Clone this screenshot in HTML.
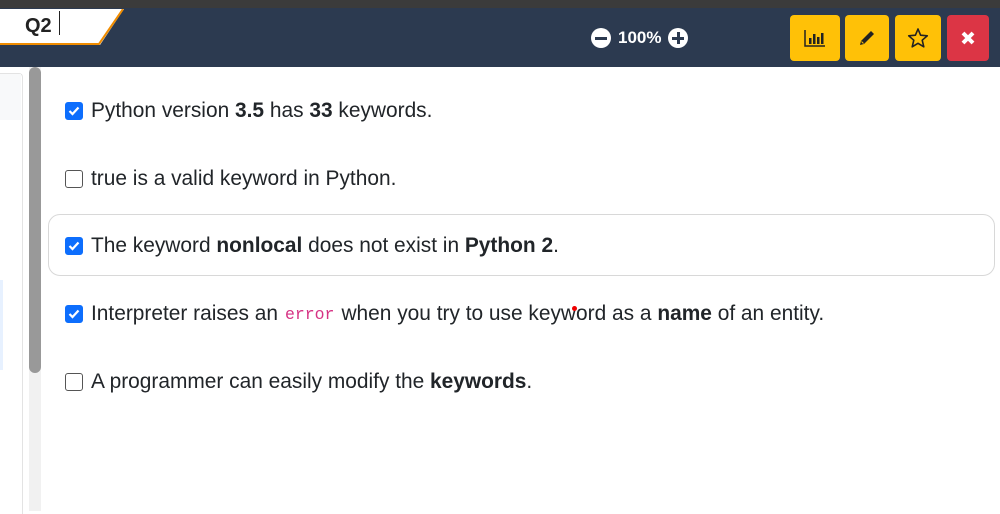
<!DOCTYPE html>
<html><head><style>
body{margin:0;width:1000px;height:511px;overflow:hidden;background:#fff;font-family:"Liberation Sans",sans-serif;position:relative;color:#212529}
.top{position:absolute;left:0;top:0;width:1000px;height:8px;background:#3b3b3b}
.nav{position:absolute;left:0;top:8px;width:1000px;height:59px;background:#2c3a50}
.tab{position:absolute;left:0;top:9px;width:124px;height:36px}
.q{position:absolute;left:25px;top:15px;font-weight:bold;font-size:20px;color:#222}
.cur{position:absolute;left:59px;top:11px;width:1px;height:24px;background:#222}
.zoom{position:absolute;left:591px;top:28px;color:#fff;font-weight:bold;font-size:17px;display:flex;align-items:center;gap:7px}
.circ{width:20px;height:20px;border-radius:50%;background:#fff;position:relative}
.circ:before{content:"";position:absolute;left:4px;top:8.5px;width:12px;height:3px;background:#2c3a50}
.circ.p:after{content:"";position:absolute;left:8.5px;top:4px;width:3px;height:12px;background:#2c3a50}
.btn{position:absolute;top:15px;height:46px;border-radius:4px;background:#ffc107;display:flex;align-items:center;justify-content:center}
.left{position:absolute;left:0;top:73px;width:22px;height:440px;border-right:1px solid #e3e3e3;border-top:1px solid #e3e3e3;border-top-right-radius:4px}
.lg{position:absolute;left:0;top:74px;width:21px;height:46px;background:#f8f9fa}
.lb{position:absolute;left:0;top:280px;width:3px;height:90px;background:#e7f1ff}
.track{position:absolute;left:29px;top:67px;width:12px;height:444px;background:#f1f1f1}
.thumb{position:absolute;left:29px;top:67px;width:12px;height:306px;background:#999;border-radius:6px}
.row{position:absolute;left:65px;font-size:20.9px;display:flex;align-items:center;white-space:nowrap}
.cb{width:18px;height:18px;border:1px solid #555;border-radius:3px;margin-right:8px;box-sizing:border-box;flex:none}
.cb.on{background:#0d6efd;border-color:#0d6efd;display:flex;align-items:center;justify-content:center}
.hl{position:absolute;left:48px;top:214px;width:945px;height:60px;border:1px solid #d8d8d8;border-radius:12px}
code{font-family:"Liberation Mono",monospace;color:#d63384;font-size:16.5px;margin:0 7px}
b{font-weight:bold}
</style></head><body>
<div class="top"></div>
<div class="nav"></div>
<svg class="tab" width="124" height="36"><polygon points="0,0 124,0 100,36 0,36" fill="#fff"/><polyline points="0,35 99,35 123,0" fill="none" stroke="#f08c00" stroke-width="2"/></svg>
<div class="q">Q2</div><div class="cur"></div>
<div class="zoom"><div class="circ"></div><span>100%</span><div class="circ p"></div></div>
<div class="btn" style="left:790px;width:50px"><svg width="24" height="20"><path d="M2 2V18H22" stroke="#222" stroke-width="1.5" fill="none"/><rect x="6" y="10" width="2.5" height="6" fill="#222"/><rect x="10" y="6" width="2.5" height="10" fill="#222"/><rect x="14" y="9" width="2.5" height="7" fill="#222"/><rect x="18" y="5" width="2.5" height="11" fill="#222"/></svg></div>
<div class="btn" style="left:845px;width:44px"><svg width="20" height="20"><path d="M3 17L4 13L14 3L17 6L7 16Z" fill="#222"/><path d="M4.5 13.5L6.5 15.5" stroke="#ffc107" stroke-width="1"/></svg></div>
<div class="btn" style="left:895px;width:46px"><svg width="22" height="22"><path d="M11 2L13.6 8.2L20.3 8.8L15.2 13.2L16.8 19.8L11 16.3L5.2 19.8L6.8 13.2L1.7 8.8L8.4 8.2Z" fill="none" stroke="#222" stroke-width="1.6" stroke-linejoin="round"/></svg></div>
<div class="btn" style="left:947px;width:42px;background:#dc3545"><svg width="16" height="16"><path d="M3 3L13 13M13 3L3 13" stroke="#fff" stroke-width="4"/></svg></div>
<div class="left"></div><div class="lg"></div><div class="lb"></div>
<div class="track"></div><div class="thumb"></div>
<div class="hl"></div>
<div class="row" style="top:99px"><div class="cb on"><svg width="12" height="10"><path d="M1.5 5L4.5 8L10.5 1.5" stroke="#fff" stroke-width="2.2" fill="none"/></svg></div>Python version&nbsp;<b>3.5</b>&nbsp;has&nbsp;<b>33</b>&nbsp;keywords.</div>
<div class="row" style="top:167px"><div class="cb"></div>true is a valid keyword in Python.</div>
<div class="row" style="top:234px"><div class="cb on"><svg width="12" height="10"><path d="M1.5 5L4.5 8L10.5 1.5" stroke="#fff" stroke-width="2.2" fill="none"/></svg></div>The keyword&nbsp;<b>nonlocal</b>&nbsp;does not exist in&nbsp;<b>Python 2</b>.</div>
<div class="row" style="top:302px"><div class="cb on"><svg width="12" height="10"><path d="M1.5 5L4.5 8L10.5 1.5" stroke="#fff" stroke-width="2.2" fill="none"/></svg></div>Interpreter raises an<code>error</code>when you try to use keyword as a&nbsp;<b>name</b>&nbsp;of an entity.</div>
<div style="position:absolute;left:572px;top:306px;width:5px;height:5px;border-radius:50%;background:#e00"></div>
<div class="row" style="top:370px"><div class="cb"></div>A programmer can easily modify the&nbsp;<b>keywords</b>.</div>
</body></html>
